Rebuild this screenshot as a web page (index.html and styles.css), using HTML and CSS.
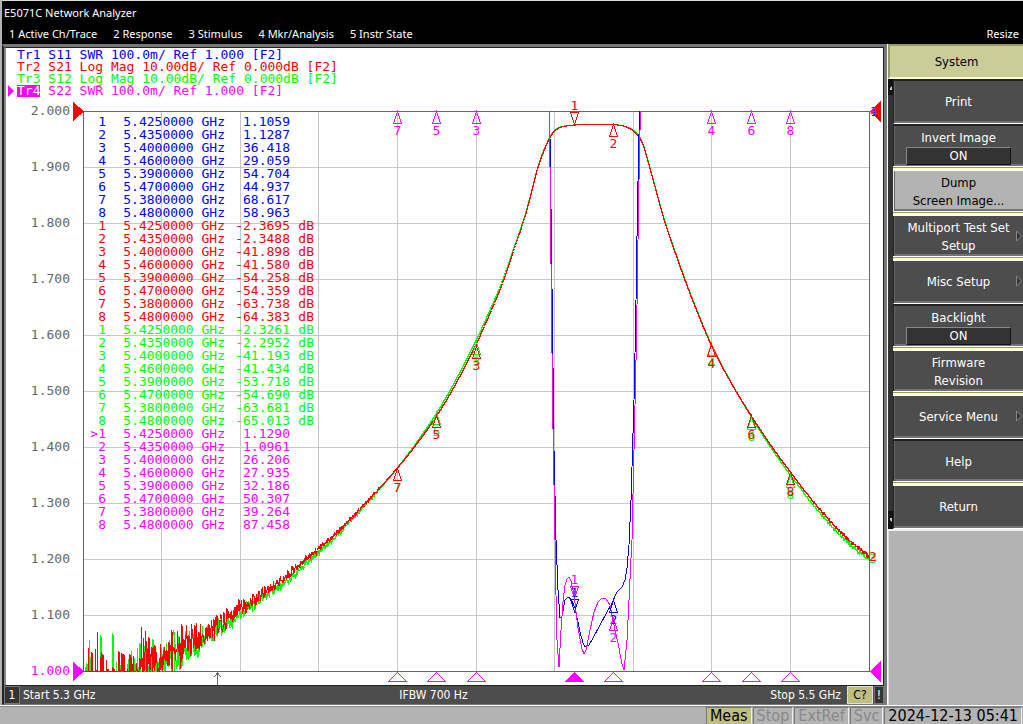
FILE: index.html
```html
<!DOCTYPE html>
<html lang="en">
<head>
    <meta charset="UTF-8">
    <meta name="viewport" content="width=device-width, initial-scale=1.0">
    <title>E5071C Network Analyzer</title>
    <link rel="stylesheet" href="styles.css">
</head>
<body>
    <header class="top">
        <div class="title">E5071C Network Analyzer</div>
        <nav class="menu">
            <button type="button">1 Active Ch/Trace</button>
            <button type="button">2 Response</button>
            <button type="button">3 Stimulus</button>
            <button type="button">4 Mkr/Analysis</button>
            <button type="button">5 Instr State</button>
            <button type="button" class="resize">Resize</button>
        </nav>
    </header>

    <main class="main">
        <section class="channel">
            <div class="screen">
                <ul class="traces">
                    <li class="tr1">Tr1 S11 SWR 100.0m/ Ref 1.000 [F2]</li>
                    <li class="tr2">Tr2 S21 Log Mag 10.00dB/ Ref 0.000dB [F2]</li>
                    <li class="tr3">Tr3 S12 Log Mag 10.00dB/ Ref 0.000dB [F2]</li>
                    <li class="tr4 active"><span>Tr4</span> S22 SWR 100.0m/ Ref 1.000 [F2]</li>
                </ul>
                <div class="plot">
                    <svg id="plot" viewBox="6 98 877 587"></svg>
                    <table class="markers"><tbody id="markers"></tbody></table>
                </div>
            </div>
            <div class="sweep">
                <span class="num">1</span>
                <span class="start">Start 5.3 GHz</span>
                <span class="ifbw">IFBW 700 Hz</span>
                <span class="stop">Stop 5.5 GHz</span>
                <span class="cor">C?</span>
                <span class="warn">!</span>
            </div>
        </section>

        <aside class="side">
            <h2>System</h2>
            <div class="keys">
                <div class="rail">
                    <svg width="5" height="16" viewBox="0 0 5 16"><path d="M2 11V9L4 7V11Z"/></svg>
                    <svg width="5" height="18" viewBox="0 0 5 18"><path d="M2 7H4V11L2 9Z"/></svg>
                </div>
                <div class="list">
                    <button type="button">Print</button>
                    <button type="button" class="group">Invert Image<b>ON</b></button>
                    <button type="button" class="group selected">Dump<br>Screen Image...</button>
                    <button type="button" class="group">Multiport Test Set<br>Setup<svg class="more" width="6" height="12" viewBox="0 0 6 12"><path d="M.5 1V11L5.500 6Z"/></svg></button>
                    <button type="button">Misc Setup<svg class="more" width="6" height="12" viewBox="0 0 6 12"><path d="M.5 1V11L5.500 6Z"/></svg></button>
                    <button type="button" class="group">Backlight<b>ON</b></button>
                    <button type="button" class="group">Firmware<br>Revision</button>
                    <button type="button">Service Menu<svg class="more" width="6" height="12" viewBox="0 0 6 12"><path d="M.5 1V11L5.500 6Z"/></svg></button>
                    <button type="button" class="group">Help</button>
                    <button type="button">Return</button>
                </div>
            </div>
            <div class="empty"></div>
        </aside>
    </main>

    <footer class="status">
        <span class="on">Meas</span>
        <span>Stop</span>
        <span>ExtRef</span>
        <span>Svc</span>
        <time>2024-12-13 05:41</time>
    </footer>

    <script src="script.js"></script>
</body>
</html>
```

FILE: styles.css
```css
* {
    box-sizing: border-box;
}
body {
    margin: 0;
    min-height: 100vh;
    display: flex;
    flex-direction: column;
    background-color: #b3b3b3;
    font-family: "DejaVu Sans Condensed", "DejaVu Sans", sans-serif;
    font-size: 12px;
}
button {
    font: inherit;
    margin: 0;
}

/* title and menu */
.top {
    height: 44px;
    margin-left: 2px;
    border-top: 1px solid #d9dcd9;
    background-color: #000;
    color: #fff;
    font-family: "Noto Sans", sans-serif;
    font-size: 11px;
}
.title {
    padding-left: 2px;
    line-height: 24px;
}
.menu {
    display: flex;
    gap: 16px;
    padding: 0 4px 0 7px;
}
.menu button {
    padding: 0;
    border: 0;
    background: none;
    color: #fff;
    line-height: 18px;
}
.menu .resize {
    margin-left: auto;
}

.main {
    flex: 1;
    display: grid;
    grid-template-columns: 1fr 136px;
    padding-left: 2px;
    border-bottom: 1px solid #fff;
}

/* channel window */
.channel {
    display: flex;
    flex-direction: column;
    border: solid #777;
    border-width: 3px 3px 1px 2px;
    border-left-color: #222;
    background-color: #4d4d4d;
}
.screen {
    border: 1px solid #222;
    border-width: 1px 1px 1px 2px;
    border-left-color: #888;
    background-color: #fff;
}
.traces {
    list-style: none;
    margin: 0;
    padding: 1px 0 1px 11px;
    font: 13px/12px "DejaVu Sans Mono", monospace;
}
.tr1 { color: #00f; }
.tr2 { color: #f00; }
.tr3 { color: #0f0; }
.tr4 { color: #f0f; }
.active {
    position: relative;
}
.active span {
    display: inline-block;
    background-color: #f0f;
    color: #fff;
}
.active::before {
    content: "";
    position: absolute;
    left: -9px;
    top: 0;
    border: 6px solid transparent;
    border-left-color: #f0f;
    border-right: 0;
}
.plot {
    position: relative;
}
.plot > svg {
    display: block;
    width: 100%;
    height: auto;
    font: 13px "DejaVu Sans Mono", monospace;
    shape-rendering: crispEdges;
}
.markers {
    position: absolute;
    left: 84px;
    top: 17px;
    border-collapse: collapse;
    font: 13px/13px "DejaVu Sans Mono", monospace;
    white-space: pre;
}
.markers td {
    padding: 0;
    text-align: right;
}
.markers td:nth-child(1) {
    width: 16px;
}
.markers td:nth-child(2) {
    width: 119px;
}
.markers td:nth-child(3) {
    width: 65px;
}
.markers td:nth-child(4) {
    width: 24px;
}
.sweep {
    flex: 1;
    display: grid;
    grid-template-columns: 16px 1fr auto 1fr 26px 11px;
    align-items: center;
    min-height: 18px;
    line-height: 16px;
    color: #fff;
}
.num {
    border: 1px solid #777;
    background-color: #333;
    text-align: center;
}
.start {
    padding-left: 3px;
}
.stop {
    padding-right: 6px;
    text-align: right;
}
.cor {
    border: 1px solid #ddd;
    background-color: #bfbf80;
    color: #000;
    text-align: center;
}
.warn {
    margin-left: 1px;
    border: 1px solid #777;
    background-color: #333;
    text-align: center;
}

/* softkeys */
.side {
    display: flex;
    flex-direction: column;
    background-color: #b3b3b3;
    border-left: 1px solid #fff;
    font-size: 13px;
}
.side h2 {
    height: 35px;
    margin: 0;
    border: solid #999966;
    border-width: 2px 0 0 2px;
    border-bottom: 2px solid #ffffcc;
    background-color: #cccc99;
    font-size: 13px;
    font-weight: normal;
    line-height: 32px;
    text-align: center;
}
.keys {
    display: grid;
    grid-template-columns: 5px 1fr;
}
.rail {
    display: flex;
    flex-direction: column;
    justify-content: space-between;
    background-color: #333;
}
.rail svg {
    background-color: #111;
    fill: #ccc;
}
.list {
    display: grid;
    grid-auto-rows: 45px;
}
.list button {
    position: relative;
    padding: 0;
    border: solid #222;
    border-width: 2px 0 1px 1px;
    border-bottom-color: #fff;
    background-color: #4d4d4d;
    box-shadow: inset 1px 0 #666, inset 0 -2px #737373;
    color: #fff;
    line-height: 18px;
    text-align: center;
}
.list .group {
    padding-top: 2px;
    border-bottom-width: 3px;
}
.list .group::after {
    content: "";
    position: absolute;
    z-index: 1;
    left: -1px;
    right: 0;
    bottom: -5px;
    height: 5px;
    background: linear-gradient(#fff 1px, #999966 1px, #999966 2px, #ffffcc 2px, #ffffcc 4px, #fff 4px);
}
.list .selected {
    background-color: #b3b3b3;
    border-color: #eee;
    color: #000;
}
.list b {
    display: block;
    width: 105px;
    margin: 0 auto;
    border: 1px solid #111;
    border-top-color: #888;
    border-left-color: #888;
    background-color: #333;
    font-weight: normal;
    line-height: 16px;
}
.more {
    position: absolute;
    right: 1px;
    top: 14px;
    fill: #333;
    stroke: #888;
}
.empty {
    flex: 1;
    border-top: 2px solid #eee;
    border-left: 1px solid #ddd;
}

/* status bar */
.status {
    display: flex;
    justify-content: flex-end;
    gap: 1px;
    height: 18px;
    padding-right: 1px;
    border-top: 1px solid #888;
    font-size: 16px;
    line-height: 16px;
    color: #888;
}
.status span,
.status time {
    padding: 0 3px;
    border: 1px solid #777;
    border-right-color: #eee;
    border-bottom: 0;
}
.status .on {
    background-color: #bfbf80;
    color: #000;
}
.status time {
    color: #000;
}
```

FILE: script.js
```javascript
const RED = '#f00', GREEN = '#0f0', BLUE = '#00f', PINK = '#f0f';
const LEFT = 83, TOP = 111, BOTTOM = 671, RIGHT = 869;

const freqs = [5.425, 5.435, 5.4, 5.46, 5.39, 5.47, 5.38, 5.48];
const values = [
    ['tr1', '', ['1.1059', '1.1287', '36.418', '29.059', '54.704', '44.937', '68.617', '58.963']],
    ['tr2', 'dB', ['-2.3695', '-2.3488', '-41.898', '-41.580', '-54.258', '-54.359', '-63.738', '-64.383']],
    ['tr3', 'dB', ['-2.3261', '-2.2952', '-41.193', '-41.434', '-53.718', '-54.690', '-63.681', '-65.013']],
    ['tr4', '', ['1.1290', '1.0961', '26.206', '27.935', '32.186', '50.307', '39.264', '87.458']]
];

// marker table
let rows = '';
for (const [name, unit, list] of values) {
    list.forEach((value, i) => {
        const num = (name === 'tr4' && i === 0 ? '>' : '') + (i + 1);
        rows += `<tr class="${name}"><td>${num}</td><td>${freqs[i].toFixed(7)} GHz</td><td>${value}</td><td>${unit}</td></tr>`;
    });
}
document.getElementById('markers').innerHTML = rows;

let out = '';
const line = (x1, y1, x2, y2, color) => {
    out += `<path d="M${x1} ${y1}L${x2} ${y2}" stroke="${color}" fill="none"/>`;
};
const text = (x, y, color, value, anchor = 'middle') => {
    out += `<text x="${x}" y="${y}" fill="${color}" text-anchor="${anchor}">${value}</text>`;
};
const poly = (points, color, fill = 'none') => {
    out += `<polygon points="${points}" stroke="${color}" fill="${fill}"/>`;
};
const trace = (points, color) => {
    out += `<polyline points="${points.map(p => p.join()).join(' ')}" stroke="${color}" fill="none"/>`;
};
const xOf = f => Math.floor(LEFT + (f - 5.3) * 3930 + 0.05) + 0.5;

// grid
for (let i = 1; i < 10; i++) {
    const x = Math.floor(LEFT + i * 78.6) + 0.5;
    const y = TOP + i * 56 + 0.5;
    line(x, TOP, x, BOTTOM, '#c8c8c8');
    line(LEFT, y, RIGHT, y, '#c8c8c8');
}
out += `<rect x="${LEFT + 0.5}" y="${TOP + 0.5}" width="${RIGHT - LEFT}" height="${BOTTOM - TOP}" fill="none" stroke="#666"/>`;
for (let i = 0; i <= 10; i++) {
    text(70, TOP + i * 56 + 4, i === 10 ? PINK : '#666', (2 - i / 10).toFixed(3), 'end');
}

// transmission traces: smooth curve through the knots, noise near the floor
const s21 = [[83, 708], [110, 691], [140, 669], [161, 656], [180, 646], [200, 635], [218, 623], [240, 608], [265, 591], [290, 573], [318, 549], [340, 529], [370, 498], [397, 468], [417, 443], [437, 415], [456, 383], [476, 344], [490, 313], [502, 284], [513, 252], [525, 216], [532, 190], [538, 167], [544, 150], [550, 137], [554, 131], [560, 127], [570, 125], [585, 124], [603, 124], [613, 124], [625, 126], [633, 130], [638, 135], [643, 144], [650, 168], [665, 222], [678, 260], [690, 293], [711, 344], [731, 382], [751, 415], [771, 445], [790, 471], [815, 503], [842, 533], [869, 556]];
const shift = [[83, 5], [240, 5], [318, 4], [380, 1], [397, 0], [437, -3], [476, -4], [530, -1], [600, 0], [711, -1], [751, 1], [790, 3], [869, 4]];
const at = (knots, x) => {
    let i = 0;
    while (i < knots.length - 2 && knots[i + 1][0] < x) i++;
    const [x1, y1] = knots[i], [x2, y2] = knots[i + 1];
    const [x0, y0] = knots[Math.max(i - 1, 0)], [x3, y3] = knots[Math.min(i + 2, knots.length - 1)];
    const h = x2 - x1, t = (x - x1) / h;
    const m1 = (y2 - y0) / (x2 - x0) * h, m2 = (y3 - y1) / (x3 - x1) * h;
    return (2 * t ** 3 - 3 * t * t + 1) * y1 + (t ** 3 - 2 * t * t + t) * m1
        + (3 * t * t - 2 * t ** 3) * y2 + (t ** 3 - t * t) * m2;
};
let seed = 11;
const random = () => {
    seed = (seed * 16807) % 2147483647;
    return seed / 2147483647 - 0.5;
};
function noisy(offset) {
    const points = [];
    for (let x = LEFT; x <= RIGHT; x += 0.5) {
        let y = at(s21, x) + (offset ? at(shift, x) : 0);
        let amp = 0;
        if (x < 380) amp = 95 * Math.exp(-(x - LEFT) / 72);
        if (x > 790) amp = (x - 790) / 22;
        y += (random() + random()) * amp;
        points.push([x, Math.min(BOTTOM + 0.5, Math.round(y) + 0.5)]);
    }
    return points;
}
trace(noisy(true), GREEN);
trace(noisy(false), RED);

// reflection traces
trace([[549.5, 111], [550.5, 164], [551.5, 250], [552.5, 325], [554, 450], [556, 540], [558, 590], [560, 618], [562, 616], [565, 600], [568, 597], [571, 599], [575, 608], [580, 632], [583, 643], [585, 647], [589, 645], [592, 640], [600, 625], [612, 603], [617, 592], [622, 587], [625, 580], [627, 568], [629, 545], [631, 500], [634, 400], [635.5, 330], [636.5, 270], [637.5, 204], [639.5, 111]], BLUE);
trace([[83, 111.5], [549.5, 111.5], [550.5, 220], [551.5, 305], [552.5, 400], [555, 540], [556, 595], [557, 640], [559, 667], [561, 630], [563, 602], [565, 585], [567, 579], [569, 577], [571, 581], [574, 595], [578, 628], [582, 649], [584, 654], [586, 650], [590, 630], [594, 612], [598, 602], [602, 598], [606, 599], [610, 605], [614, 625], [618, 643], [622, 664], [624, 670], [627, 640], [629, 600], [631, 558], [632, 540], [634, 450], [636.5, 338], [638, 240], [639.5, 150], [640.5, 111.5], [869, 111.5]], PINK);

// markers on the traces
function marker(n, x, y, color) {
    poly(`${x},${y} ${x + 4},${y + 12} ${x - 4},${y + 12}`, color);
    text(x, y + 23, color, n);
}
function activeMarker(n, x, y, color) {
    poly(`${x},${y} ${x + 4},${y - 12} ${x - 4},${y - 12}`, color);
    text(x, y - 15, color, n);
}
freqs.forEach((f, i) => {
    const x = xOf(f), n = i + 1;
    if (i > 1) {
        marker(n, x, TOP + 0.5, PINK);
        marker(n, x, Math.round(TOP - values[2][2][i] * 5.6) + 0.5, GREEN);
        marker(n, x, Math.round(TOP - values[1][2][i] * 5.6) + 0.5, RED);
    }
    poly(`${x},672.5 ${x + 9},681.5 ${x - 9},681.5`, PINK, i === 0 ? PINK : 'none');
});
activeMarker(1, 574.5, 124.5, RED);
marker(2, 613.5, 124.5, RED);
activeMarker(1, 574.5, 611.5, BLUE);
marker(2, 613.5, 600.5, BLUE);
activeMarker(1, 574.5, 598.5, PINK);
marker(2, 613.5, 618.5, PINK);

// reference level arrows
poly('73,102 83,111.5 73,121', RED, RED);
poly('73,662 83,671.5 73,681', PINK, PINK);
poly('880,102 871,111.5 880,121', RED, RED);
poly('880,662 871,671.5 880,681', PINK, PINK);
text(874, 116, BLUE, 1);
text(874, 116, PINK, 4);
text(873, 563, GREEN, 3);
text(873, 561, RED, 2);
line(869, 111.5, 876, 111.5, PINK);

// stimulus pointer
out += '<path d="M217.500 685V673M214 677L217.500 673L221 677" stroke="#666" fill="none"/>';

document.getElementById('plot').innerHTML = out;
```
